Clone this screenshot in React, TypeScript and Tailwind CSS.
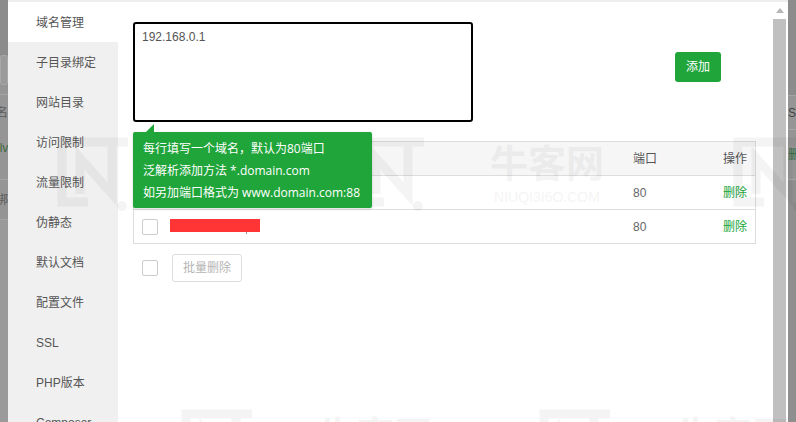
/**
 * Site settings modal — domain management tab, over a dimmed page.
 */
const FONT = "font-['Liberation_Sans','Noto_Sans_CJK_SC',sans-serif]";

const MENU = ['域名管理', '子目录绑定', '网站目录', '访问限制', '流量限制', '伪静态', '默认文档', '配置文件', 'SSL', 'PHP版本', 'Composer'];

function Checkbox() {
  return <span className="block h-4 w-4 shrink-0 rounded-[2px] border border-[#cccccc] bg-white" />;
}

/** Faint repeating site mark that sits over the page. */
function Watermark({ className, showText = true }: { className: string; showText?: boolean }) {
  return (
    <div className={`pointer-events-none absolute flex opacity-[0.04] ${className}`}>
      <svg width="78" height="84" viewBox="0 0 78 84" fill="none" stroke="#000" strokeWidth="9">
        <path d="M72 8H6v60h26" />
        <path d="M24 60V24l32 36V8" />
        <circle cx="66" cy="72" r="5" fill="#000" stroke="none" />
      </svg>
      {showText && (
        <div className="ml-[60px] flex flex-col items-center pt-[9px] text-[#000]">
          <span className="text-[38px] leading-[42px] font-bold">牛客网</span>
          <span className="mt-[4px] text-[14px] leading-[16px]">NIUQI3I6O.COM</span>
        </div>
      )}
    </div>
  );
}

export default function App() {
  return (
    <div className={`relative flex h-[422px] w-[796px] overflow-hidden bg-[#959595] text-[12px] text-[#555555] ${FONT}`}>
      {/* dimmed page, left edge */}
      <div className="flex w-2 shrink-0 flex-col overflow-hidden">
        <div className="h-[55px] bg-[#8c8c8c]" />
        <div className="h-[30px] rounded-[3px] border border-[#a8a8a8] bg-[#9a9a9a]" />
        <div className="h-[10px] border-b border-[#a5a5a5]" />
        <div className="flex h-[35px] items-center justify-end leading-none whitespace-nowrap text-[#5c5c5c]">名</div>
        <div className="flex h-[35px] items-center leading-none whitespace-nowrap text-[#3f6b3f]">
          <span className="-ml-[3px]">llv</span>
        </div>
        <div className="h-[15px] border-b border-[#a5a5a5]" />
        <div className="flex h-[40px] items-center justify-end border-b border-[#a5a5a5] leading-none whitespace-nowrap text-[#5c5c5c]">绑</div>
        <div className="flex-1 bg-[#9a9a9a]" />
      </div>

      {/* modal */}
      <div className="flex min-w-0 flex-1 flex-col bg-white">
        <div className="h-[2px] shrink-0 bg-[#eeeeee]" />
        <div className="flex min-h-0 flex-1">
          <aside className="w-[110px] shrink-0 bg-[#f0f0f0]">
            {MENU.map((item, i) => (
              <div key={item} className={`flex h-10 items-center pt-[2px] pl-[28px] ${i === 0 ? 'bg-white' : ''}`}>
                {item}
              </div>
            ))}
          </aside>

          <main className="min-w-0 flex-1 pt-5 pl-[15px]">
            <div className="relative flex w-[623px] items-center">
              <textarea
                readOnly
                defaultValue="192.168.0.1"
                className="h-[100px] w-[340px] resize-none rounded-[3px] border-2 border-black bg-white px-[7px] py-[4px] text-[12px] leading-[18px] text-[#555555] outline-none"
              />
              <button className="mb-[10px] ml-[202px] h-[30px] w-[46px] rounded-[3px] bg-[#20a53a] text-[12px] text-white">添加</button>

              {/* hint bubble over the table */}
              <div className="absolute top-[110px] left-0 z-10 h-[76px] w-[239px] rounded-[2px] bg-[#20a53a] pt-[6px] pl-[10px] font-['Open_Sans','Noto_Sans_CJK_SC',sans-serif] text-[12px] leading-[22px] whitespace-nowrap text-white shadow-[0_1px_3px_rgba(0,0,0,0.15)]">
                <span className="absolute -top-2 left-[13px] h-0 w-0 border-b-[8px] border-l-[8px] border-b-[#20a53a] border-l-transparent" />
                <p>每行填写一个域名，默认为80端口</p>
                <p>泛解析添加方法 *.domain.com</p>
                <p>如另加端口格式为 www.domain.com:88</p>
              </div>
            </div>

            <div className="mt-[19px] w-[623px] border border-[#dddddd]">
              <div className="flex h-[33px] items-center bg-[#f6f6f6] pr-2">
                <span className="ml-[499px] w-[90px]">端口</span>
                <span className="ml-auto">操作</span>
              </div>
              <div className="flex h-[34px] items-center border-t border-[#dddddd] pr-2">
                <span className="ml-[499px] w-[90px] text-[#666666]">80</span>
                <span className="ml-auto text-[#20a53a]">删除</span>
              </div>
              <div className="flex h-[34px] items-center border-t border-[#dddddd] pr-2 pl-2">
                <Checkbox />
                <span className="relative mb-[3px] ml-3 h-[13px] w-[90px] bg-[#ff3535]">
                  <span className="absolute top-[13px] left-[76px] h-[2px] w-px bg-[#8a9a8a]" />
                </span>
                <span className="ml-[373px] w-[90px] text-[#666666]">80</span>
                <span className="ml-auto text-[#20a53a]">删除</span>
              </div>
            </div>

            <div className="mt-[10px] flex items-center pl-[9px]">
              <Checkbox />
              <button className="ml-[14px] h-[28px] w-[70px] rounded-[3px] border border-[#dddddd] bg-white text-[12px] text-[#b5b5b5]">批量删除</button>
            </div>
          </main>

          {/* scrollbar */}
          <div className="flex w-[13px] shrink-0 flex-col items-center">
            <div className="flex h-[17px] items-center justify-center">
              <span className="h-0 w-0 border-r-[4px] border-b-[5px] border-l-[4px] border-r-transparent border-b-[#b5b5b5] border-l-transparent" />
            </div>
            <div className="w-full flex-1 bg-[#c0c0c0]" />
          </div>
          <div className="w-[2px] shrink-0" />
        </div>
      </div>

      {/* dimmed page, right edge */}
      <div className="flex w-2 shrink-0 flex-col overflow-hidden bg-[#959595]">
        <div className="h-[96px] border-b border-[#a5a5a5] bg-[#8c8c8c]" />
        <div className="flex h-[34px] items-center border-b border-[#a5a5a5] leading-none whitespace-nowrap text-[#444444]">SL</div>
        <div className="flex h-[50px] items-center border-b border-[#a5a5a5] leading-none whitespace-nowrap text-[#2f6b3f]">删除</div>
        <div className="flex-1 bg-[#8f8f8f]" />
      </div>

      <Watermark className="top-[134px] left-[56px]" />
      <Watermark className="top-[134px] left-[352px]" />
      <Watermark className="top-[134px] left-[732px]" showText={false} />
      <Watermark className="top-[406px] left-[180px]" />
      <Watermark className="top-[406px] left-[538px]" />
    </div>
  );
}
